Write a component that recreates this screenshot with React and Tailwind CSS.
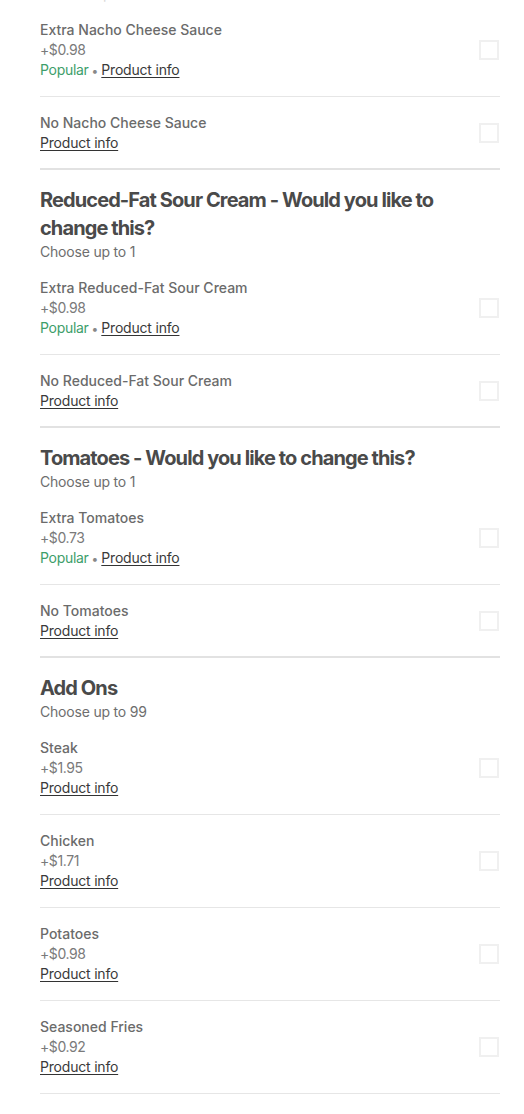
import React from 'react'

const sections = [
  {
    items: [
      { name: "Extra Nacho Cheese Sauce", price: "+$0.98", popular: true },
      { name: "No Nacho Cheese Sauce" },
    ],
  },
  {
    title: "Reduced-Fat Sour Cream - Would you like to change this?",
    sub: "Choose up to 1",
    items: [
      { name: "Extra Reduced-Fat Sour Cream", price: "+$0.98", popular: true },
      { name: "No Reduced-Fat Sour Cream" },
    ],
  },
  {
    title: "Tomatoes - Would you like to change this?",
    sub: "Choose up to 1",
    items: [
      { name: "Extra Tomatoes", price: "+$0.73", popular: true },
      { name: "No Tomatoes" },
    ],
  },
  {
    title: "Add Ons",
    sub: "Choose up to 99",
    items: [
      { name: "Steak", price: "+$1.95" },
      { name: "Chicken", price: "+$1.71" },
      { name: "Potatoes", price: "+$0.98" },
      { name: "Seasoned Fries", price: "+$0.92" },
    ],
  },
]

const ProductInfo = () => (
  <span className="text-[#3a3a3a] underline underline-offset-2 decoration-[#333] tracking-[-0.2px]">Product info</span>
)

const Item = ({ item, last }) => (
  <div className={`flex items-center justify-between pt-4 ${last ? 'pb-[15px]' : 'pb-4 border-b border-[#e6e6e6]'}`}>
    <div className="flex flex-col text-sm leading-5">
      <span className="text-[#6b6b6b] font-medium">{item.name}</span>
      {item.price && <span className="text-[#7a7a7a] tracking-[-0.4px]">{item.price}</span>}
      {item.popular ? (
        <span>
          <span className="text-[#3d9e6a] tracking-[-0.3px]">Popular</span>
          <span className="text-[#888] text-xs mx-[3px]">•</span>
          <ProductInfo />
        </span>
      ) : (
        <span><ProductInfo /></span>
      )}
    </div>
    <div className="w-5 h-5 border-2 border-[#f0f0f0] mr-px" />
  </div>
)

export default function App() {
  return (
    <div className="bg-white min-h-screen pl-10 pr-6 overflow-hidden" style={{ fontFamily: 'Inter, "Noto Sans", sans-serif' }}>
      <div className="text-sm leading-5 text-[#d8d8d8] -mt-[16px]">Choose up to 1</div>
      {sections.map((section, i) => (
        <div key={i} className={i < sections.length - 1 ? 'border-b-2 border-[#e2e2e2]' : ''}>
          {section.title && (
            <div className="pt-4">
              <h2 className="text-[20px] leading-7 font-bold text-[#4a4a4a] tracking-[-0.9px] pr-12">{section.title}</h2>
              <p className="text-sm leading-5 text-[#6e6e6e] tracking-[-0.2px]">{section.sub}</p>
            </div>
          )}
          {section.items.map((item, j) => (
            <Item key={j} item={item} last={j === section.items.length - 1 && i < sections.length - 1} />
          ))}
        </div>
      ))}
    </div>
  )
}
